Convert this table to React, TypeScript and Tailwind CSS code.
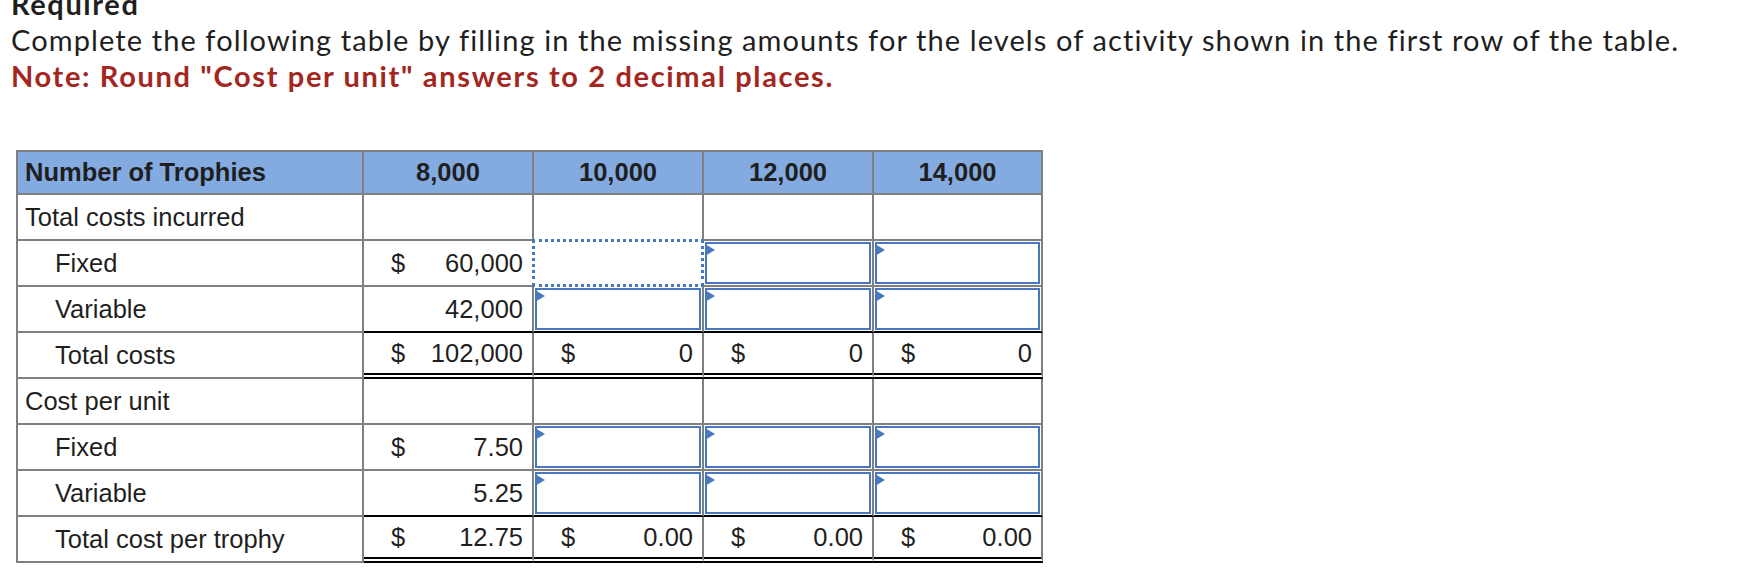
type Cell =
  | { kind: 'empty' }
  | { kind: 'value'; dollar?: boolean; value: string }
  | { kind: 'input' }
  | { kind: 'focus' };

type Row = {
  label: string;
  indent?: boolean;
  line?: 'single' | 'double';
  cells: Cell[];
};

const levels = ['8,000', '10,000', '12,000', '14,000'];

const empty: Cell = { kind: 'empty' };
const input: Cell = { kind: 'input' };

const rows: Row[] = [
  { label: 'Total costs incurred', cells: [empty, empty, empty, empty] },
  {
    label: 'Fixed',
    indent: true,
    cells: [{ kind: 'value', dollar: true, value: '60,000' }, { kind: 'focus' }, input, input],
  },
  {
    label: 'Variable',
    indent: true,
    line: 'single',
    cells: [{ kind: 'value', value: '42,000' }, input, input, input],
  },
  {
    label: 'Total costs',
    indent: true,
    line: 'double',
    cells: [
      { kind: 'value', dollar: true, value: '102,000' },
      { kind: 'value', dollar: true, value: '0' },
      { kind: 'value', dollar: true, value: '0' },
      { kind: 'value', dollar: true, value: '0' },
    ],
  },
  { label: 'Cost per unit', cells: [empty, empty, empty, empty] },
  {
    label: 'Fixed',
    indent: true,
    cells: [{ kind: 'value', dollar: true, value: '7.50' }, input, input, input],
  },
  {
    label: 'Variable',
    indent: true,
    line: 'single',
    cells: [{ kind: 'value', value: '5.25' }, input, input, input],
  },
  {
    label: 'Total cost per trophy',
    indent: true,
    line: 'double',
    cells: [
      { kind: 'value', dollar: true, value: '12.75' },
      { kind: 'value', dollar: true, value: '0.00' },
      { kind: 'value', dollar: true, value: '0.00' },
      { kind: 'value', dollar: true, value: '0.00' },
    ],
  },
];

function DataCell({ cell, line }: { cell: Cell; line?: Row['line'] }) {
  let border = 'border-r-2 border-b-2 border-[#808080]';
  if (line === 'single') border = 'border-r-2 border-b-2 border-r-[#808080] border-b-black';
  if (line === 'double')
    border = 'border-r-2 border-b-[6px] border-r-[#808080] border-b-black [border-bottom-style:double]';

  if (cell.kind === 'input') {
    return (
      <div className={`h-[46px] p-px ${border}`}>
        <div className="relative h-full border-2 border-[#4a78bf] bg-white">
          {/* little flag marker */}
          <span className="absolute -left-[2px] top-0 h-0 w-0 border-y-[6px] border-l-[10px] border-y-transparent border-l-[#4a78bf]" />
        </div>
      </div>
    );
  }

  if (cell.kind === 'focus') {
    return (
      <div className={`relative h-[46px] ${border}`}>
        <div className="absolute -inset-[2px] border-[3px] border-dotted border-[#4a78bf] bg-white" />
      </div>
    );
  }

  if (cell.kind === 'value') {
    return (
      <div
        className={`flex h-[46px] items-center pl-[27px] pr-[9px] ${
          cell.dollar ? 'justify-between' : 'justify-end'
        } ${border}`}
      >
        {cell.dollar && <span>$</span>}
        <span>{cell.value}</span>
      </div>
    );
  }

  return <div className={`h-[46px] ${border}`} />;
}

export default function App() {
  return (
    <div className="h-[586px] w-[1752px] overflow-hidden bg-white">
      <div className="-mt-[14px] pl-[11px] font-['Lato',sans-serif] text-[29px] leading-[36px] text-[#1f1f1f]">
        <p className="font-bold tracking-[1.6px]">Required</p>
        <p className="tracking-[1.1px]">
          Complete the following table by filling in the missing amounts for the levels of activity shown
          in the first row of the table.
        </p>
        <p className="font-bold tracking-[1.65px] text-[#a3261f]">
          Note: Round "Cost per unit" answers to 2 decimal places.
        </p>
      </div>

      <div className="ml-[16px] mt-[56px] grid w-fit grid-cols-[346px_170px_170px_170px_169px] border-l-2 border-t-2 border-[#808080] font-['Liberation_Sans',Arial,sans-serif] text-[25.5px] text-[#1f1f1f]">
        {/* header */}
        <div className="flex h-[43px] items-center border-r-2 border-b-2 border-[#808080] bg-[#84abe0] pl-[7px] font-bold">
          Number of Trophies
        </div>
        {levels.map((lvl) => (
          <div
            key={lvl}
            className="flex h-[43px] items-center justify-center border-r-2 border-b-2 border-[#808080] bg-[#84abe0] font-bold"
          >
            {lvl}
          </div>
        ))}

        {rows.map((row, i) => (
          <div key={i} className="contents">
            <div
              className={`flex h-[46px] items-center border-r-2 border-b-2 border-[#808080] ${
                row.indent ? 'pl-[37px]' : 'pl-[7px]'
              }`}
            >
              {row.label}
            </div>
            {row.cells.map((cell, j) => (
              <DataCell key={j} cell={cell} line={row.line} />
            ))}
          </div>
        ))}
      </div>
    </div>
  );
}
